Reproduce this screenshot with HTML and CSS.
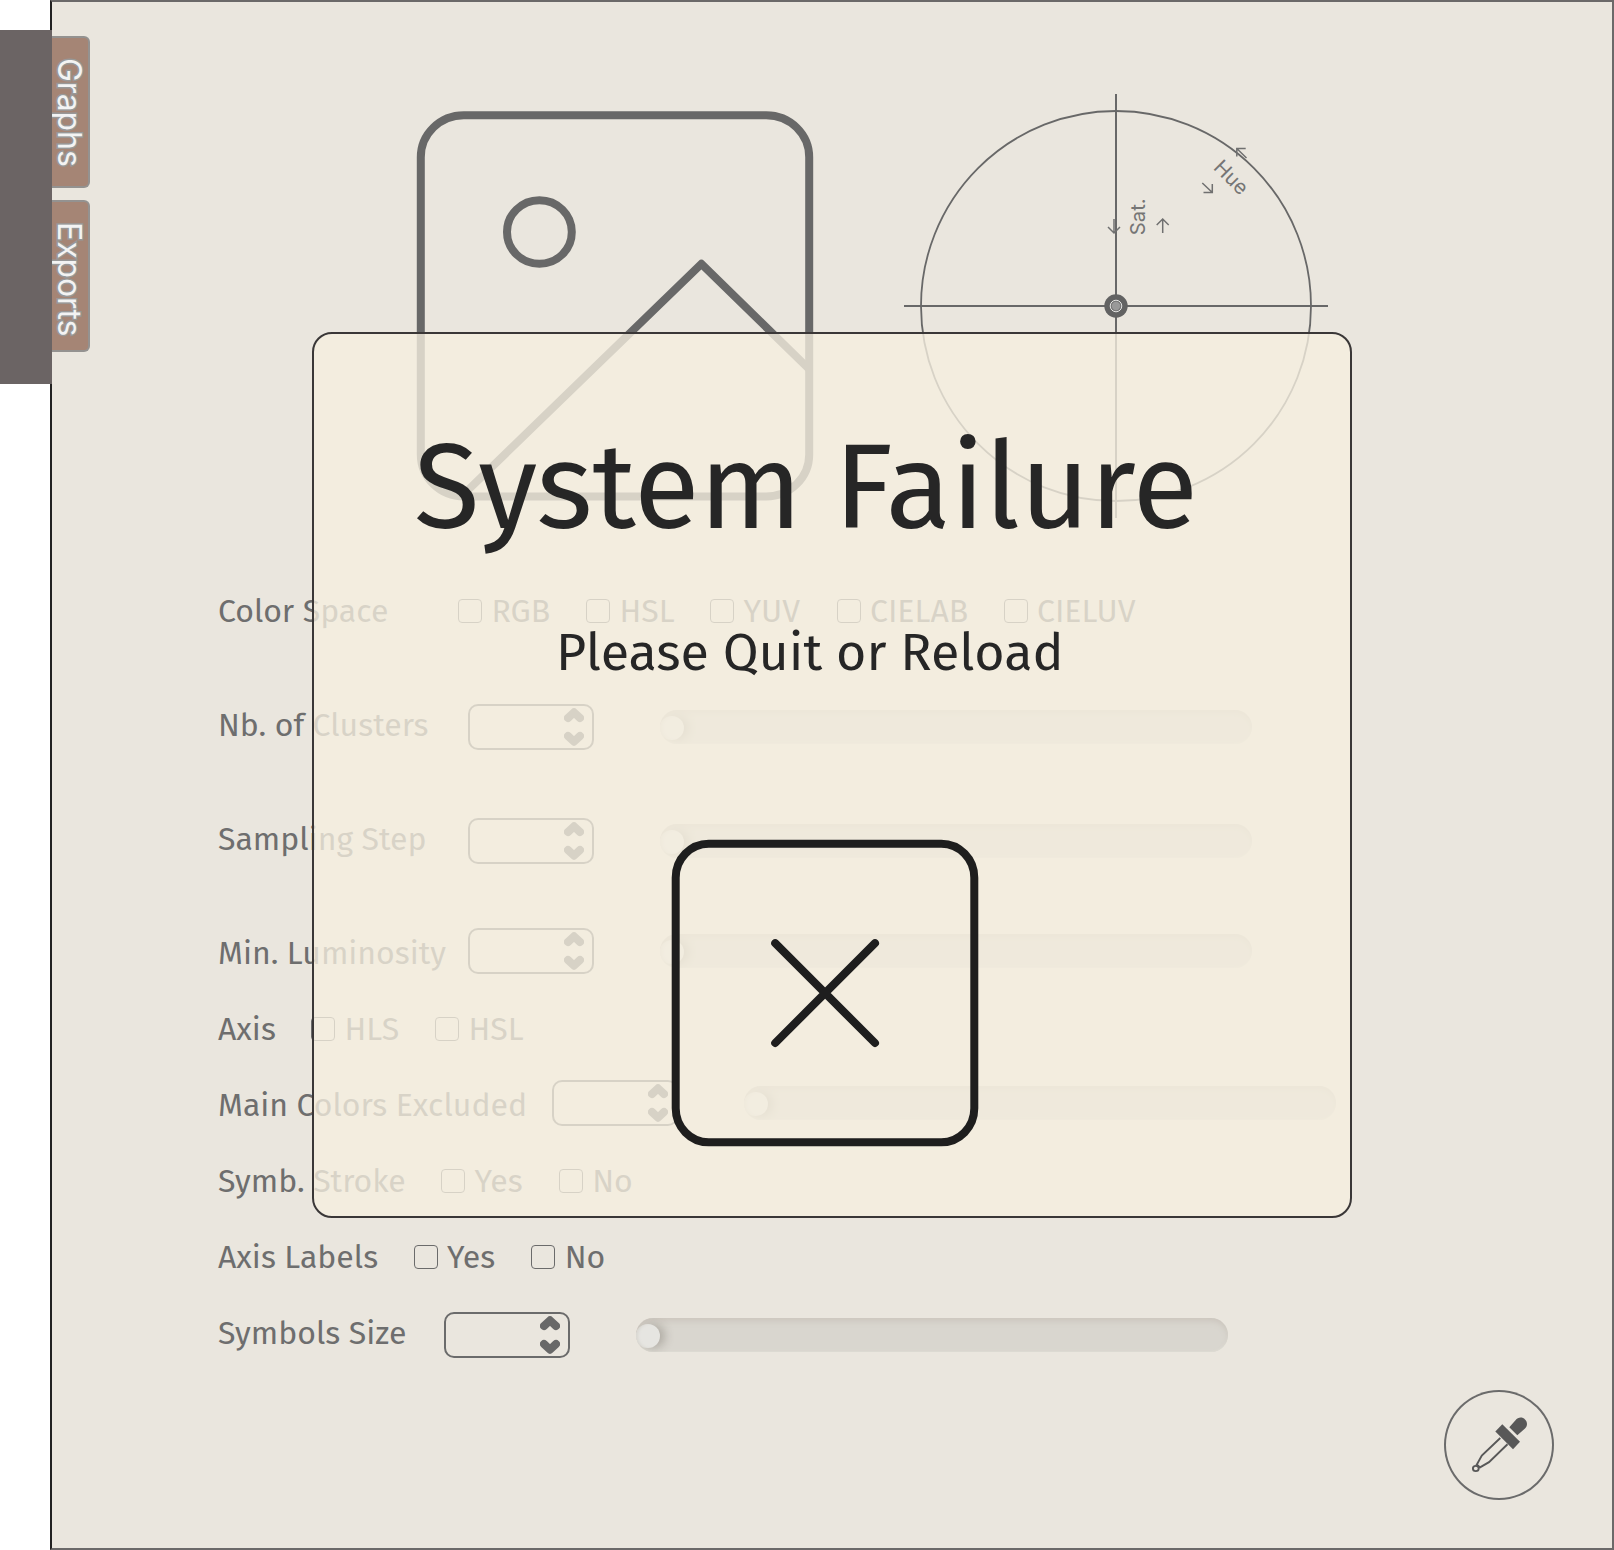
FILE: index.html
```
<!DOCTYPE html>
<html lang="en">
<head>
<meta charset="utf-8">
<title>System Failure</title>
<link rel="stylesheet" href="styles.css">
</head>
<body>
<svg width="0" height="0" class="defs" aria-hidden="true">
  <symbol id="chevrons" viewBox="0 0 20 38">
    <path d="M4 10 10 4.3 16 10M4 28 10 33.7 16 28" fill="none" stroke="currentColor" stroke-width="8" stroke-linecap="round" stroke-linejoin="round"/>
  </symbol>
</svg>
<div class="app">
  <aside class="rail"><div class="rail-bar"></div></aside>
  <div class="panel">
    <nav class="tabs">
      <a class="tab"><span>Graphs</span></a>
      <a class="tab"><span>Exports</span></a>
    </nav>
    <main class="content">
      <section class="visuals">
        <svg class="picture" width="400" height="424" viewBox="416 94 400 424" fill="none" stroke="#686868" stroke-width="8">
          <rect x="420.8" y="115.2" width="388.4" height="381.2" rx="43" ry="42"/>
          <ellipse cx="539.4" cy="232" rx="32.4" ry="31.8"/>
          <path d="M466 492 701.4 263.8 809 369" stroke-linejoin="round"/>
        </svg>
        <svg class="wheel" width="424" height="424" viewBox="904 94 424 424" fill="none" stroke="#686868" stroke-width="2">
          <circle cx="1116" cy="306" r="195" stroke-width="1.8"/>
          <path d="M904 306H1328M1116 94V518"/>
          <g stroke="#707070" stroke-width="1.5">
            <path d="M1114 219V233M1108 227 1114 233 1120 227"/>
            <path d="M1162.7 233V219M1156.7 225 1162.7 219 1168.7 225"/>
            <path d="M1246.5 158 1236.8 148.5M1245.7 148.5H1236.8V156.5"/>
            <path d="M1202.3 183 1212.3 192.5M1212.3 184V192.5H1203.5"/>
          </g>
          <text class="wheel-label" transform="translate(1145.4 235.2) rotate(-90)">Sat.</text>
          <text class="wheel-label" transform="translate(1212.5 168.6) rotate(45)">Hue</text>
          <circle cx="1116" cy="306" r="11.7" fill="#626262" stroke="none"/>
          <circle cx="1116" cy="306" r="5.8" fill="#777" stroke="#e4e4e2" stroke-width="1"/>
          <circle cx="1116" cy="306" r="4.2" fill="#999" stroke="none"/>
        </svg>
      </section>
      <form class="settings">
        <div class="row row-tall"><span class="label label-space">Color Space</span>
          <div class="options options-space">
            <label class="option"><i class="check"></i>RGB</label>
            <label class="option"><i class="check"></i>HSL</label>
            <label class="option"><i class="check"></i>YUV</label>
            <label class="option"><i class="check"></i>CIELAB</label>
            <label class="option"><i class="check"></i>CIELUV</label>
          </div>
        </div>
        <div class="row row-tall low"><span class="label label-range">Nb. of Clusters</span>
          <div class="number"><svg width="20" height="38"><use href="#chevrons"/></svg></div>
          <div class="slider"><i class="knob"></i></div>
        </div>
        <div class="row row-tall low"><span class="label label-range">Sampling Step</span>
          <div class="number"><svg width="20" height="38"><use href="#chevrons"/></svg></div>
          <div class="slider"><i class="knob"></i></div>
        </div>
        <div class="row high"><span class="label label-range">Min. Luminosity</span>
          <div class="number"><svg width="20" height="38"><use href="#chevrons"/></svg></div>
          <div class="slider"><i class="knob"></i></div>
        </div>
        <div class="row"><span class="label label-axis">Axis</span>
          <div class="options options-axis">
            <label class="option"><i class="check"></i>HLS</label>
            <label class="option"><i class="check"></i>HSL</label>
          </div>
        </div>
        <div class="row high"><span class="label label-main">Main Colors Excluded</span>
          <div class="number"><svg width="20" height="38"><use href="#chevrons"/></svg></div>
          <div class="slider"><i class="knob"></i></div>
        </div>
        <div class="row"><span class="label label-stroke">Symb. Stroke</span>
          <div class="options options-yesno">
            <label class="option"><i class="check"></i>Yes</label>
            <label class="option"><i class="check"></i>No</label>
          </div>
        </div>
        <div class="row"><span class="label label-labels">Axis Labels</span>
          <div class="options options-yesno">
            <label class="option"><i class="check"></i>Yes</label>
            <label class="option"><i class="check"></i>No</label>
          </div>
        </div>
        <div class="row low"><span class="label label-size">Symbols Size</span>
          <div class="number"><svg width="20" height="38"><use href="#chevrons"/></svg></div>
          <div class="slider"><i class="knob"></i></div>
        </div>
      </form>
    </main>
    <button class="picker" aria-label="Pick color">
      <svg width="110" height="110" viewBox="0 0 110 110">
        <path d="M65.3 37.3 71.5 30.2C74 27 78.5 26.8 81 29.5 83.7 32 83.6 36 81 38.5L73.3 45.3Z" fill="#585858"/>
        <path d="M58.3 34.3 51.3 41.5 69 59.2 76 51.7Z" fill="#585858"/>
        <path d="M56.3 48 37.8 65.5 32.3 75.5M63.5 54.2 45 72.2 36 77.3M33 74.8 36.6 78" fill="none" stroke="#585858" stroke-width="1.9"/>
        <ellipse cx="31.8" cy="78.5" rx="2.9" ry="2.6" fill="none" stroke="#585858" stroke-width="1.9"/>
      </svg>
    </button>
  </div>
  <section class="modal" role="alertdialog">
    <h1 class="modal-title">System Failure</h1>
    <p class="modal-text">Please Quit or Reload</p>
    <button class="modal-close" aria-label="Close">
      <svg width="312" height="312" viewBox="0 0 312 312" fill="none" stroke="#1e1e1e" stroke-width="8" stroke-linecap="round">
        <rect x="6.7" y="6.7" width="298.6" height="298.6" rx="33" ry="34"/>
        <path d="M106.2 106.2 206 206M206 106.2 106.2 206"/>
      </svg>
    </button>
  </section>
</div>
</body>
</html>
```
FILE: styles.css
```
* { box-sizing: border-box; }

body {
  margin: 0;
  background: #fff;
  font-family: "Fira Sans", "Noto Sans", sans-serif;
  color: #6e6e6e;
}

button {
  margin: 0;
  padding: 0;
  border: 0;
  background: none;
}

svg { display: block; }

.defs { position: absolute; }

.app {
  position: relative;
  display: flex;
  width: 1614px;
  height: 1550px;
  overflow: hidden;
}

.rail {
  flex: none;
  width: 50px;
  padding-top: 30px;
}

.rail-bar {
  position: relative;
  z-index: 1;
  width: 52px;
  height: 354px;
  background: #6b6464;
}

.panel {
  position: relative;
  display: flex;
  flex: 1;
  border: 2px solid #6b6969;
  border-left-color: #222;
  background: #eae6de;
}

/* Side tabs */
.tabs {
  display: flex;
  flex-direction: column;
  gap: 12px;
  width: 38px;
  padding-top: 34px;
}

.tab {
  height: 152px;
  padding-top: 20px;
  overflow: hidden;
  border: 2px solid #949290;
  border-left: 0;
  border-radius: 0 6px 6px 0;
  background: #a58575;
  writing-mode: vertical-rl;
  font: 32px/34px Inter, sans-serif;
  letter-spacing: -0.1px;
  color: #f3f3f3;
}

.tab span {
  display: block;
  width: 34px;
  margin-right: 2px;
  -webkit-text-stroke: 3px #989898;
  paint-order: stroke fill;
}

.content {
  flex: 1;
  padding: 92px 0 0 128px;
}

.visuals {
  display: flex;
  gap: 88px;
  padding-left: 198px;
}

.wheel-label {
  font: 400 20.3px Inter, sans-serif;
  fill: #757575;
  stroke: none;
}

/* Settings rows */
.settings {
  margin-top: 55px;
  font-size: 32px;
  line-height: 40px;
}

.row {
  display: flex;
  align-items: center;
  height: 76px;
}

.row-tall { margin-bottom: 38px; }

.label {
  flex: none;
  white-space: nowrap;
}

.label-space { width: 240px; }
.label-range { width: 250px; }
.label-axis { width: 93px; }
.label-main { width: 334px; }
.label-stroke { width: 223px; }
.label-labels { width: 195.5px; }
.label-size { width: 226px; }

.options { display: grid; }
.options-space { grid-template-columns: 128px 124px 126.5px 167px auto; }
.options-axis { grid-template-columns: 124px auto; }
.options-yesno { grid-template-columns: 117.7px auto; }

.option {
  display: flex;
  align-items: center;
  gap: 9.5px;
}

.check {
  width: 24px;
  height: 24px;
  margin-bottom: 1px;
  border: 1px solid #6b6b6b;
  border-radius: 4px;
}

.number {
  display: flex;
  flex: none;
  justify-content: flex-end;
  width: 126px;
  height: 46px;
  padding: 2px 8.500px 0 0;
  border: 2px solid #6b6b6b;
  border-radius: 10px;
  color: #686868;
}

.slider {
  flex: none;
  width: 592px;
  height: 34px;
  margin-left: 66px;
  padding-top: 6px;
  overflow: hidden;
  border-radius: 17px;
  background: #d9d6cf;
  box-shadow: inset 0 4px 6px -1px #cbc5bd, inset 0 -1px 2px #dfddd5;
}

.low .number, .low .slider { margin-top: 4px; }
.high .number, .high .slider { margin-bottom: 4px; }

.knob {
  display: block;
  width: 24px;
  height: 24px;
  border-radius: 50%;
  background: #e6e5e1;
  box-shadow: 5px 0 10px rgba(70, 60, 50, 0.28), inset 3px 0 3px -1px #d9d7d1;
}

.picker {
  position: absolute;
  right: 58px;
  bottom: 48px;
  width: 110px;
  height: 110px;
  border-radius: 50%;
  box-shadow: inset 0 0 0 2px #6b6b6b;
}

/* Failure dialog */
.modal {
  position: absolute;
  left: 312px;
  top: 332px;
  display: flex;
  flex-direction: column;
  align-items: flex-start;
  width: 1040px;
  height: 886px;
  padding-top: 84px;
  border: 2px solid #3a3737;
  border-radius: 20px;
  background: rgba(245, 238, 223, 0.79);
  background-clip: padding-box;
  color: #262626;
}

.modal-title {
  margin: 0 0 0 100px;
  font-size: 120px;
  font-weight: 400;
  line-height: 140px;
  white-space: nowrap;
}

.modal-text {
  margin: 65px 0 0 242px;
  font-size: 52px;
  line-height: 60px;
}

.modal-close { margin: 154px 0 0 355px; }
```
